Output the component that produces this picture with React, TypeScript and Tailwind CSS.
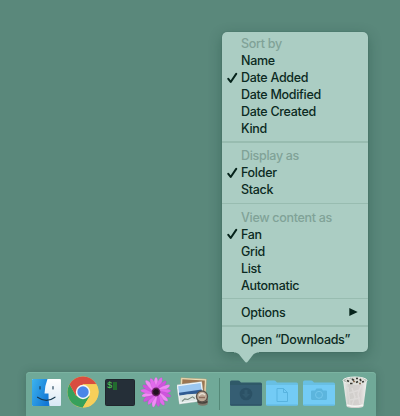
import React from 'react';

type Item = { label: string; heading?: boolean; checked?: boolean; submenu?: boolean };

const sections: Item[][] = [
  [
    { label: 'Sort by', heading: true },
    { label: 'Name' },
    { label: 'Date Added', checked: true },
    { label: 'Date Modified' },
    { label: 'Date Created' },
    { label: 'Kind' },
  ],
  [{ label: 'Display as', heading: true }, { label: 'Folder', checked: true }, { label: 'Stack' }],
  [
    { label: 'View content as', heading: true },
    { label: 'Fan', checked: true },
    { label: 'Grid' },
    { label: 'List' },
    { label: 'Automatic' },
  ],
  [{ label: 'Options', submenu: true }],
  [{ label: 'Open “Downloads”' }],
];

function MenuRow({ item }: { item: Item }) {
  return (
    <div
      className={
        'flex h-[17px] items-center whitespace-nowrap text-[12.5px] font-medium leading-[17px] tracking-[-0.3px] ' +
        (item.heading ? 'text-[#80a297]' : 'text-[#0b2a22]')
      }
    >
      <span className="flex w-[19px] shrink-0 pl-[5px]">
        {item.checked && (
          <svg width="11" height="12" viewBox="0 0 11 12" fill="none">
            <path d="M1.3 6.900 3.700 10 9.200 1.900" stroke="#06231b" strokeWidth="2" strokeLinecap="round" strokeLinejoin="round" />
          </svg>
        )}
      </span>
      <span className="grow">{item.label}</span>
      {item.submenu && (
        <svg className="mr-[10px]" width="9" height="8" viewBox="0 0 9 8">
          <path d="M.3 0 8.700 4 .3 8z" fill="#06231b" />
        </svg>
      )}
    </div>
  );
}

function Menu() {
  return (
    <div className="relative ml-[222px] h-[320px] w-[146px] rounded-[5px] bg-[#abcdc3] pt-[3px] shadow-[0_4px_14px_rgba(10,50,40,0.3),0_0_1px_rgba(10,50,40,0.5)]">
      {sections.map((items, i) => (
        <React.Fragment key={i}>
          {i > 0 && (
            <div className={'flex items-center ' + (i % 2 ? 'h-[10px]' : 'h-[10.500px]')}>
              <div className="h-[1.5px] w-full bg-[#98bcb0]" />
            </div>
          )}
          {items.map((item) => (
            <MenuRow key={item.label} item={item} />
          ))}
        </React.Fragment>
      ))}
      <svg className="absolute left-[12px] top-[319.5px]" width="25" height="12" viewBox="0 0 25 12">
        <path d="M0 0H25V.5C20 .5 19 3 17 5.5L14 9.3Q12.3 11.7 10.6 9.3L7.5 5.5C5.5 3 4.5.5 0 .5z" fill="#abcdc3" />
      </svg>
    </div>
  );
}

function Finder() {
  return (
    <svg width="29" height="27" viewBox="0 0 29 27">
      <defs>
        <linearGradient id="fb" x1="0" y1="0" x2="1" y2=".6">
          <stop offset="0" stopColor="#3cb3ee" />
          <stop offset="1" stopColor="#1478d6" />
        </linearGradient>
        <linearGradient id="fw" x1="0" y1="0" x2="0" y2="1">
          <stop offset="0" stopColor="#ffffff" />
          <stop offset="1" stopColor="#d8e8f5" />
        </linearGradient>
      </defs>
      <rect width="29" height="27" rx="1" fill="url(#fw)" />
      <path d="M1 0H15.500Q12.700 7 12.500 14.500H16.500Q16.200 21 17.500 27H1Q0 27 0 26V1Q0 0 1 0z" fill="url(#fb)" />
      <path d="M8 7.500V10M21 7.500V10M5.500 18.200Q14.500 24.500 23 18.200" fill="none" stroke="#173950" strokeWidth="1.100" strokeLinecap="round" />
    </svg>
  );
}

function Chrome() {
  return (
    <svg width="32" height="32" viewBox="0 0 32 32">
      <circle cx="16" cy="16" r="15.500" fill="#f6cf5a" />
      <path d="M16 16 9.200 19.900 2.600 8.200A15.500 15.500 0 0 0 15.800 31.500L22.800 19.900z" fill="#36a05b" />
      <path d="M2.600 8.200A15.500 15.500 0 0 1 29.400 8.200H16L9.200 19.900z" fill="#d94d40" />
      <path d="M15.800 31.500A15.500 15.500 0 0 0 29.400 8.200H16L22.800 19.900z" fill="#f6cf5a" />
      <circle cx="16" cy="16" r="7.200" fill="#f5f8f4" />
      <circle cx="16" cy="16" r="5.700" fill="#4a86e8" />
    </svg>
  );
}

function Terminal() {
  return (
    <div className="flex h-[27px] w-[30px] rounded-[1.5px] border border-[#20262c] bg-[#252f38] pl-[1px] pt-[1px] font-['Liberation_Mono',monospace] text-[9px] leading-[10px] text-[#51d456]">
      $<span className="ml-[1px] mt-[1px] h-[8px] w-[4px] bg-[#226a2e]" />
    </div>
  );
}

const petals = Array.from({ length: 17 }, (_, i) => (i * 360) / 17);

function Flower() {
  return (
    <svg width="32" height="32" viewBox="0 0 32 32">
      {petals.map((angle, i) => (
        <ellipse
          key={angle}
          cx="16"
          cy={i % 2 ? 8 : 8.700}
          rx="2.200"
          ry="7.500"
          fill={i % 3 === 0 ? '#f08cf4' : i % 3 === 1 ? '#e16aec' : '#cf55dd'}
          stroke="#aa45bc"
          strokeWidth=".2"
          transform={`rotate(${angle} 16 16)`}
        />
      ))}
      <circle cx="16" cy="16" r="4.400" fill="#651e5e" />
      <circle cx="16" cy="16" r="3" fill="#21101f" stroke="#4b2040" strokeWidth="1" strokeDasharray="1 1" />
    </svg>
  );
}

function Preview() {
  return (
    <svg width="32" height="30" viewBox="0 0 32 30">
      <g transform="rotate(3 18 10)">
        <rect x="3.500" y="1.500" width="25.500" height="20" fill="#eee0b9" stroke="#a98d65" strokeWidth=".4" />
        <rect x="5" y="3" width="22.500" height="17" fill="#9b7551" />
      </g>
      <g transform="rotate(-8 14 16)">
        <rect x="0.800" y="6" width="25.500" height="19.500" fill="#f3f7f8" stroke="#97aaa4" strokeWidth=".3" />
        <rect x="2.200" y="7.500" width="22.700" height="8" fill="#9bc7f0" />
        <path d="M2.200 14H25V18.500L2.200 17z" fill="#305b92" />
        <path d="M2.200 17Q12 16 25 18.500V24H2.200z" fill="#dce5e3" />
        <path d="M4 23 7 21l3 1 5-2 2 2" fill="none" stroke="#75877d" strokeWidth="1.100" />
      </g>
      <path d="M20 22H31L30.500 27.500Q25.500 30 21 27.500z" fill="#7d7669" />
      <path d="M20.500 24.500Q25.500 27.500 30.500 24.500" fill="none" stroke="#47423b" strokeWidth="1.500" />
      <circle cx="25" cy="19.500" r="5.500" fill="#bda996" stroke="#595149" strokeWidth="1.300" />
      <path d="M21.800 18.500Q25 14.700 28 18" fill="none" stroke="#e7dfd4" strokeWidth="1.500" />
      <path d="M22 20.500H28" stroke="#8a6a5a" strokeWidth="1.400" />
    </svg>
  );
}

function Folder({ kind }: { kind: 'download' | 'document' | 'camera' }) {
  const dark = kind === 'download';
  return (
    <svg width="32" height="26" viewBox="0 0 32 26">
      <path d="M0 2Q0 .5 1.500 .5H8Q9.500 .5 10 1.500L11 2.500H30.500Q32 2.500 32 4V24Q32 25.500 30.500 25.500H1.500Q0 25.500 0 24z" fill={dark ? '#2f5968' : '#68bfe3'} />
      <path d="M0 5H32V24Q32 25.500 30.500 25.500H1.500Q0 25.500 0 24z" fill={dark ? '#355e73' : '#73cbf5'} />
      <path d="M.5 25H31.500" stroke={dark ? '#294c60' : '#5ab2dc'} strokeWidth=".8" />
      {kind === 'download' && (
        <g>
          <circle cx="16" cy="14" r="6.300" fill="#2b5165" />
          <path d="M14.500 10H17.500V14H20L16 18 12 14H14.500z" fill="#325a6e" />
        </g>
      )}
      {kind === 'document' && (
        <path d="M11 8.500H17.500L21.500 12.500V21.500H11zM17.500 8.500V12.500H21.500" fill="none" stroke="#58b3df" strokeWidth="1" />
      )}
      {kind === 'camera' && (
        <g>
          <path d="M9 10.500H12L13.500 8.500H18.500L20 10.500H23Q24 10.500 24 11.500V18.500Q24 20 22.500 20H9.500Q8 20 8 18.500V11.500Q8 10.500 9 10.500z" fill="#5cb5dd" />
          <circle cx="16" cy="14.800" r="3.500" fill="#5cb5dd" stroke="#75c7ec" strokeWidth="1" />
        </g>
      )}
    </svg>
  );
}

function Trash() {
  return (
    <svg width="26" height="33" viewBox="0 0 26 33">
      <defs>
        <linearGradient id="tr">
          <stop offset="0" stopColor="#eef1ee" />
          <stop offset=".25" stopColor="#d0cecb" />
          <stop offset=".7" stopColor="#d5d1cf" />
          <stop offset="1" stopColor="#f0f2ef" />
        </linearGradient>
      </defs>
      <path d="M1 4 4.500 30Q5 32 13 32T21.500 30L25 4z" fill="url(#tr)" />
      <ellipse cx="13" cy="4.500" rx="12" ry="3.500" fill="#a9b0aa" stroke="#eef1ed" strokeWidth="1" />
      <path d="M3 4 6 2 9 3 12 1 16 2 18 1 21 2 24 5 21 8 17 7 13 9 9 7 5 8z" fill="#deded8" />
      <path d="M5 4.500 7 5.500M10 3 12 4.500M14 6.500 16 5.500M18 3 19 5M20 6 22 5.500M8 7.500H10.500M14 2.500H16" fill="none" stroke="#393b35" strokeWidth="1.700" />
      <path d="M11 5.500H13M17 7.500H19" stroke="#8b7259" strokeWidth="1.300" />
      <path d="M6 11 8 29M10 12 13 21 10 29M19 10 16 18 18 28M7 17 18 14M8 24 18 22" fill="none" stroke="#f1eeee" strokeOpacity=".35" strokeWidth="1.500" />
      <path d="M5 29Q13 31.500 21 29" fill="none" stroke="#f5f6f3" strokeWidth="1.700" />
    </svg>
  );
}

function Dock() {
  return (
    <div className="ml-[26px] mt-[20px] flex h-[44px] w-[350px] items-center rounded-t-[4px] bg-[#70a998] pb-[4px] pl-[6px] shadow-[0_0_8px_rgba(20,60,48,0.25),inset_0_1px_0_#7bb3a1]">
      <div className="mt-px"><Finder /></div>
      <div className="ml-[6px]"><Chrome /></div>
      <div className="ml-[6px]"><Terminal /></div>
      <div className="ml-[5px]"><Flower /></div>
      <div className="ml-[5px]"><Preview /></div>
      <div className="ml-[10px] mt-[4px] h-[32px] w-px bg-[#548877]" />
      <div className="ml-[10px] mt-px"><Folder kind="download" /></div>
      <div className="ml-[4px] mt-px"><Folder kind="document" /></div>
      <div className="ml-[5px] mt-px"><Folder kind="camera" /></div>
      <div className="ml-[7px]"><Trash /></div>
    </div>
  );
}

export default function App() {
  return (
    <div className="h-[416px] w-[400px] overflow-hidden bg-[#5a887b] pt-[32px] font-[Inter,'Liberation_Sans',sans-serif]">
      <Menu />
      <Dock />
    </div>
  );
}
